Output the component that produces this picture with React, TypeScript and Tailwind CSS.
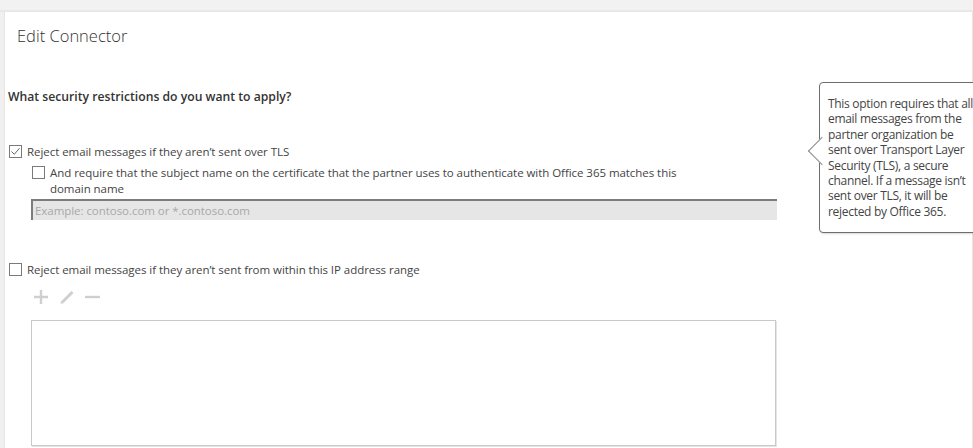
const font = { fontFamily: '"Open Sans", "Noto Sans", sans-serif' }

const Check = ({ checked = false }: { checked?: boolean }) => (
  <span className="flex h-[13px] w-[13px] shrink-0 items-center justify-center border border-[#7a7a7a] bg-white">
    {checked && (
      <svg width="11" height="11" viewBox="0 0 11 11" fill="none">
        <path d="M1.5 5.5 L4.3 8.3 L9.5 2.2" stroke="#666" strokeWidth="1" />
      </svg>
    )}
  </span>
)

// greyed-out toolbar for the IP range list
const Toolbar = () => (
  <div className="mt-[13px] ml-[29px] flex h-[14px] items-center">
    <svg width="14" height="14" viewBox="0 0 14 14">
      <path d="M7 0 V14 M0 7 H14" stroke="#cfcfcf" strokeWidth="2.4" />
    </svg>
    <svg className="ml-[12px]" width="15" height="14" viewBox="0 0 15 14">
      <path d="M2.5 12 L12.5 2" stroke="#cfcfcf" strokeWidth="3" />
      <path d="M0.5 13.8 L1.2 10.6 L3.9 13.2 Z" fill="#cfcfcf" />
    </svg>
    <svg className="ml-[10px]" width="15" height="14" viewBox="0 0 15 14">
      <path d="M0 7 H15" stroke="#cfcfcf" strokeWidth="2.4" />
    </svg>
  </div>
)

export default function App() {
  return (
    <div className="flex h-[448px] w-[973px] flex-col overflow-hidden bg-[#f3f3f3] text-[#444]" style={font}>
      <div className="h-[10px] bg-[#f2f2f2]" />
      <div className="h-[2px] bg-[#e8e8e8]" />
      <div className="flex flex-1">
        <div className="w-[4px] bg-[#f0f0f0]" />
        <div className="relative flex-1 border-l border-r border-[#e4e4e4] bg-white">
          <h1 className="mt-[13px] ml-[12px] text-[16.5px] font-light leading-[22px] text-[#333]">Edit Connector</h1>

          <p className="mt-[42px] ml-[3px] text-[12.2px] font-semibold leading-[16px] text-[#333]">
            What security restrictions do you want to apply?
          </p>

          <div className="mt-[39px] ml-[4px] flex items-center gap-[5px] text-[11.5px] leading-[15px] tracking-[-0.05px]">
            <Check checked />
            <span>Reject email messages if they aren’t sent over TLS</span>
          </div>

          <div className="mt-[6px] ml-[27px] flex items-start gap-[5px] text-[11.5px] leading-[16px] tracking-[-0.05px]">
            <span className="mt-[1px]"><Check /></span>
            <span className="w-[660px]">
              And require that the subject name on the certificate that the partner uses to authenticate with Office 365 matches this domain name
            </span>
          </div>

          <div className="mt-[2px] ml-[26px] flex h-[21px] w-[746px] items-center border-t-2 border-l-2 border-[#7c7c7c] bg-[#e6e6e6] pl-[2px] text-[11.5px] tracking-[-0.05px] text-[#a8a8a8]">
            Example: contoso.com or *.contoso.com
          </div>

          <div className="mt-[42px] ml-[4px] flex items-center gap-[5px] text-[11.5px] leading-[15px] tracking-[-0.05px]">
            <Check />
            <span>Reject email messages if they aren’t sent from within this IP address range</span>
          </div>

          <Toolbar />

          <div className="mt-[16px] ml-[26px] h-[126px] w-[745px] border border-[#c9c9c9] shadow-[1px_1px_0_#e3e6e8]" />

          <div className="absolute top-[70px] left-[814px] w-[162px] rounded-[4px] border border-[#6e6e6e] bg-white pt-[13px] pr-[4px] pb-[13px] pl-[8px] text-[12px] leading-[15.4px] tracking-[-0.3px] text-[#444] shadow-[1px_1px_2px_rgba(0,0,0,0.15)]">
            <span className="absolute top-[58px] left-[-8px] h-[20px] w-[20px] rotate-45 border-b border-l border-[#8a8a8a] bg-white" />
            <p className="relative">
              This option requires that all email messages from the partner organization be sent over Transport Layer Security (TLS), a secure channel. If a message isn’t sent over TLS, it will be rejected by Office 365.
            </p>
          </div>
        </div>
      </div>
    </div>
  )
}
